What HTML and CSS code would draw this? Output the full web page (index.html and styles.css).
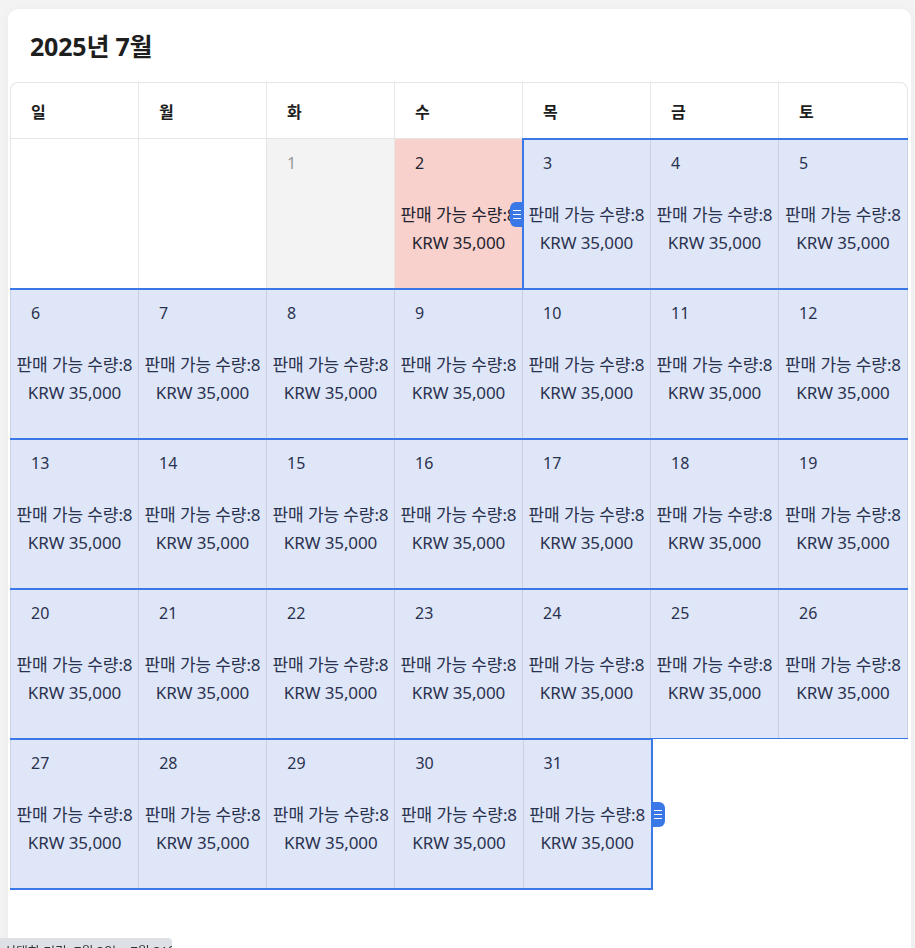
FILE: index.html
```html
<!DOCTYPE html>
<html lang="ko">
<head>
<meta charset="utf-8">
<title>2025년 7월</title>
<link rel="stylesheet" href="styles.css">
</head>
<body>
<div class="card">
  <h1 class="title">2025년 7월</h1>
  <div class="calendar">
    <div class="head">
      <div class="hcell">일</div><div class="hcell">월</div><div class="hcell">화</div><div class="hcell">수</div><div class="hcell">목</div><div class="hcell">금</div><div class="hcell">토</div>
    </div>

    <div class="week">
      <div class="day"></div>
      <div class="day"></div>
      <div class="day past"><div class="num">1</div></div>
      <div class="day today"><div class="num">2</div><div class="info"><div>판매 가능 수량:8</div><div>KRW 35,000</div></div></div>
      <div class="day"><div class="num">3</div><div class="info"><div>판매 가능 수량:8</div><div>KRW 35,000</div></div></div>
      <div class="day"><div class="num">4</div><div class="info"><div>판매 가능 수량:8</div><div>KRW 35,000</div></div></div>
      <div class="day"><div class="num">5</div><div class="info"><div>판매 가능 수량:8</div><div>KRW 35,000</div></div></div>
      <div class="sel sel-start" style="left: calc(400% / 7 - 1px); right: -1px;"><span class="handle handle-left"><i></i><i></i><i></i></span></div>
    </div>

    <div class="week">
      <div class="day"><div class="num">6</div><div class="info"><div>판매 가능 수량:8</div><div>KRW 35,000</div></div></div>
      <div class="day"><div class="num">7</div><div class="info"><div>판매 가능 수량:8</div><div>KRW 35,000</div></div></div>
      <div class="day"><div class="num">8</div><div class="info"><div>판매 가능 수량:8</div><div>KRW 35,000</div></div></div>
      <div class="day"><div class="num">9</div><div class="info"><div>판매 가능 수량:8</div><div>KRW 35,000</div></div></div>
      <div class="day"><div class="num">10</div><div class="info"><div>판매 가능 수량:8</div><div>KRW 35,000</div></div></div>
      <div class="day"><div class="num">11</div><div class="info"><div>판매 가능 수량:8</div><div>KRW 35,000</div></div></div>
      <div class="day"><div class="num">12</div><div class="info"><div>판매 가능 수량:8</div><div>KRW 35,000</div></div></div>
      <div class="sel sel-mid" style="left: -1px; right: -1px;"></div>
    </div>

    <div class="week">
      <div class="day"><div class="num">13</div><div class="info"><div>판매 가능 수량:8</div><div>KRW 35,000</div></div></div>
      <div class="day"><div class="num">14</div><div class="info"><div>판매 가능 수량:8</div><div>KRW 35,000</div></div></div>
      <div class="day"><div class="num">15</div><div class="info"><div>판매 가능 수량:8</div><div>KRW 35,000</div></div></div>
      <div class="day"><div class="num">16</div><div class="info"><div>판매 가능 수량:8</div><div>KRW 35,000</div></div></div>
      <div class="day"><div class="num">17</div><div class="info"><div>판매 가능 수량:8</div><div>KRW 35,000</div></div></div>
      <div class="day"><div class="num">18</div><div class="info"><div>판매 가능 수량:8</div><div>KRW 35,000</div></div></div>
      <div class="day"><div class="num">19</div><div class="info"><div>판매 가능 수량:8</div><div>KRW 35,000</div></div></div>
      <div class="sel sel-mid" style="left: -1px; right: -1px;"></div>
    </div>

    <div class="week">
      <div class="day"><div class="num">20</div><div class="info"><div>판매 가능 수량:8</div><div>KRW 35,000</div></div></div>
      <div class="day"><div class="num">21</div><div class="info"><div>판매 가능 수량:8</div><div>KRW 35,000</div></div></div>
      <div class="day"><div class="num">22</div><div class="info"><div>판매 가능 수량:8</div><div>KRW 35,000</div></div></div>
      <div class="day"><div class="num">23</div><div class="info"><div>판매 가능 수량:8</div><div>KRW 35,000</div></div></div>
      <div class="day"><div class="num">24</div><div class="info"><div>판매 가능 수량:8</div><div>KRW 35,000</div></div></div>
      <div class="day"><div class="num">25</div><div class="info"><div>판매 가능 수량:8</div><div>KRW 35,000</div></div></div>
      <div class="day"><div class="num">26</div><div class="info"><div>판매 가능 수량:8</div><div>KRW 35,000</div></div></div>
      <div class="sel sel-mid" style="left: -1px; right: -1px;"></div>
    </div>

    <div class="week last">
      <div class="day"><div class="num">27</div><div class="info"><div>판매 가능 수량:8</div><div>KRW 35,000</div></div></div>
      <div class="day"><div class="num">28</div><div class="info"><div>판매 가능 수량:8</div><div>KRW 35,000</div></div></div>
      <div class="day"><div class="num">29</div><div class="info"><div>판매 가능 수량:8</div><div>KRW 35,000</div></div></div>
      <div class="day"><div class="num">30</div><div class="info"><div>판매 가능 수량:8</div><div>KRW 35,000</div></div></div>
      <div class="day"><div class="num">31</div><div class="info"><div>판매 가능 수량:8</div><div>KRW 35,000</div></div></div>
      <div class="day out"></div>
      <div class="day out"></div>
      <div class="sel sel-end" style="left: -1px; right: calc(200% / 7 - 1px);"><span class="handle handle-right"><i></i><i></i><i></i></span></div>
    </div>
  </div>
</div>
<div class="toast">선택한 기간: 7월 3일 ~ 7월 31일</div>
</body>
</html>
```

FILE: styles.css
```css
* { box-sizing: border-box; }

html, body {
  margin: 0;
  padding: 0;
  background: #f3f3f3;
  font-family: "Noto Sans", "Noto Sans CJK KR", sans-serif;
  color: #1f2430;
  overflow: hidden;
}

.card {
  margin: 9px 4px 0 8px;
  background: #fff;
  border-radius: 10px;
  padding: 0 3px 80px 2px;
  min-height: 1000px;
  box-shadow: 0 2px 12px rgba(0, 0, 0, 0.04);
}

.title {
  margin: 0;
  padding: 22px 0 0 20px;
  height: 73px;
  font-size: 25px;
  line-height: 31px;
  font-weight: 700;
  color: #1e1e1e;
  letter-spacing: -0.2px;
}

.calendar {
  width: 898px;
}

.head {
  display: grid;
  grid-template-columns: repeat(7, 1fr);
  border: 1px solid #e6e6e6;
  border-bottom: none;
  border-radius: 8px 8px 0 0;
}

.hcell {
  height: 56px;
  padding: 0 0 0 20px;
  display: flex;
  align-items: center;
  font-size: 16px;
  font-weight: 700;
  color: #1e1e1e;
  border-right: 1px solid #e6e6e6;
  border-bottom: 1px solid #e6e6e6;
}
.hcell:last-child { border-right: none; }

.week {
  position: relative;
  display: grid;
  grid-template-columns: repeat(7, 1fr);
  height: 150px;
  border-left: 1px solid #e6e6e6;
  border-right: 1px solid #e6e6e6;
}
.week.last { border-right: none; }

.day {
  border-right: 1px solid #e6e6e6;
  border-bottom: 1px solid #e6e6e6;
  padding-top: 13px;
  background: #fff;
  min-width: 0;
}
.week .day:nth-child(7) { border-right: none; }

.day.past { background: #f3f3f3; color: #999; }
.day.today { background: #f8d0cc; }
.day.out { border: none; background: #fff; }

.num {
  height: 23px;
  line-height: 23px;
  padding-left: 20px;
  font-size: 16px;
}

.info {
  margin-top: 26px;
  text-align: center;
  font-size: 17px;
  line-height: 28px;
  white-space: nowrap;
  letter-spacing: -0.1px;
}

.sel {
  position: absolute;
  top: -1px;
  bottom: -1px;
  background: rgba(72, 116, 216, 0.18);
  border: 2px solid #3b78e7;
  pointer-events: none;
}
.sel-start { border-right: none; }
.sel-mid { border-left: none; border-right: none; }
.sel-end { border-left: none; }

.handle {
  position: absolute;
  top: 50%;
  width: 14px;
  height: 25px;
  margin-top: -12px;
  background: #3b78e7;
  display: flex;
  flex-direction: column;
  align-items: center;
  justify-content: center;
  gap: 3px;
}
.handle i {
  display: block;
  width: 8px;
  height: 1px;
  background: #fff;
}
.handle-left {
  left: -14px;
  border-radius: 6px 0 0 6px;
}
.handle-right {
  right: -14px;
  border-radius: 0 6px 6px 0;
}

.toast {
  position: fixed;
  left: 0;
  top: 938px;
  width: 172px;
  height: 40px;
  padding: 4px 0 0 4px;
  background: #dde1e6;
  border-radius: 0 4px 0 0;
  font-size: 13px;
  line-height: 18px;
  color: #333;
  white-space: nowrap;
  overflow: hidden;
}
```
